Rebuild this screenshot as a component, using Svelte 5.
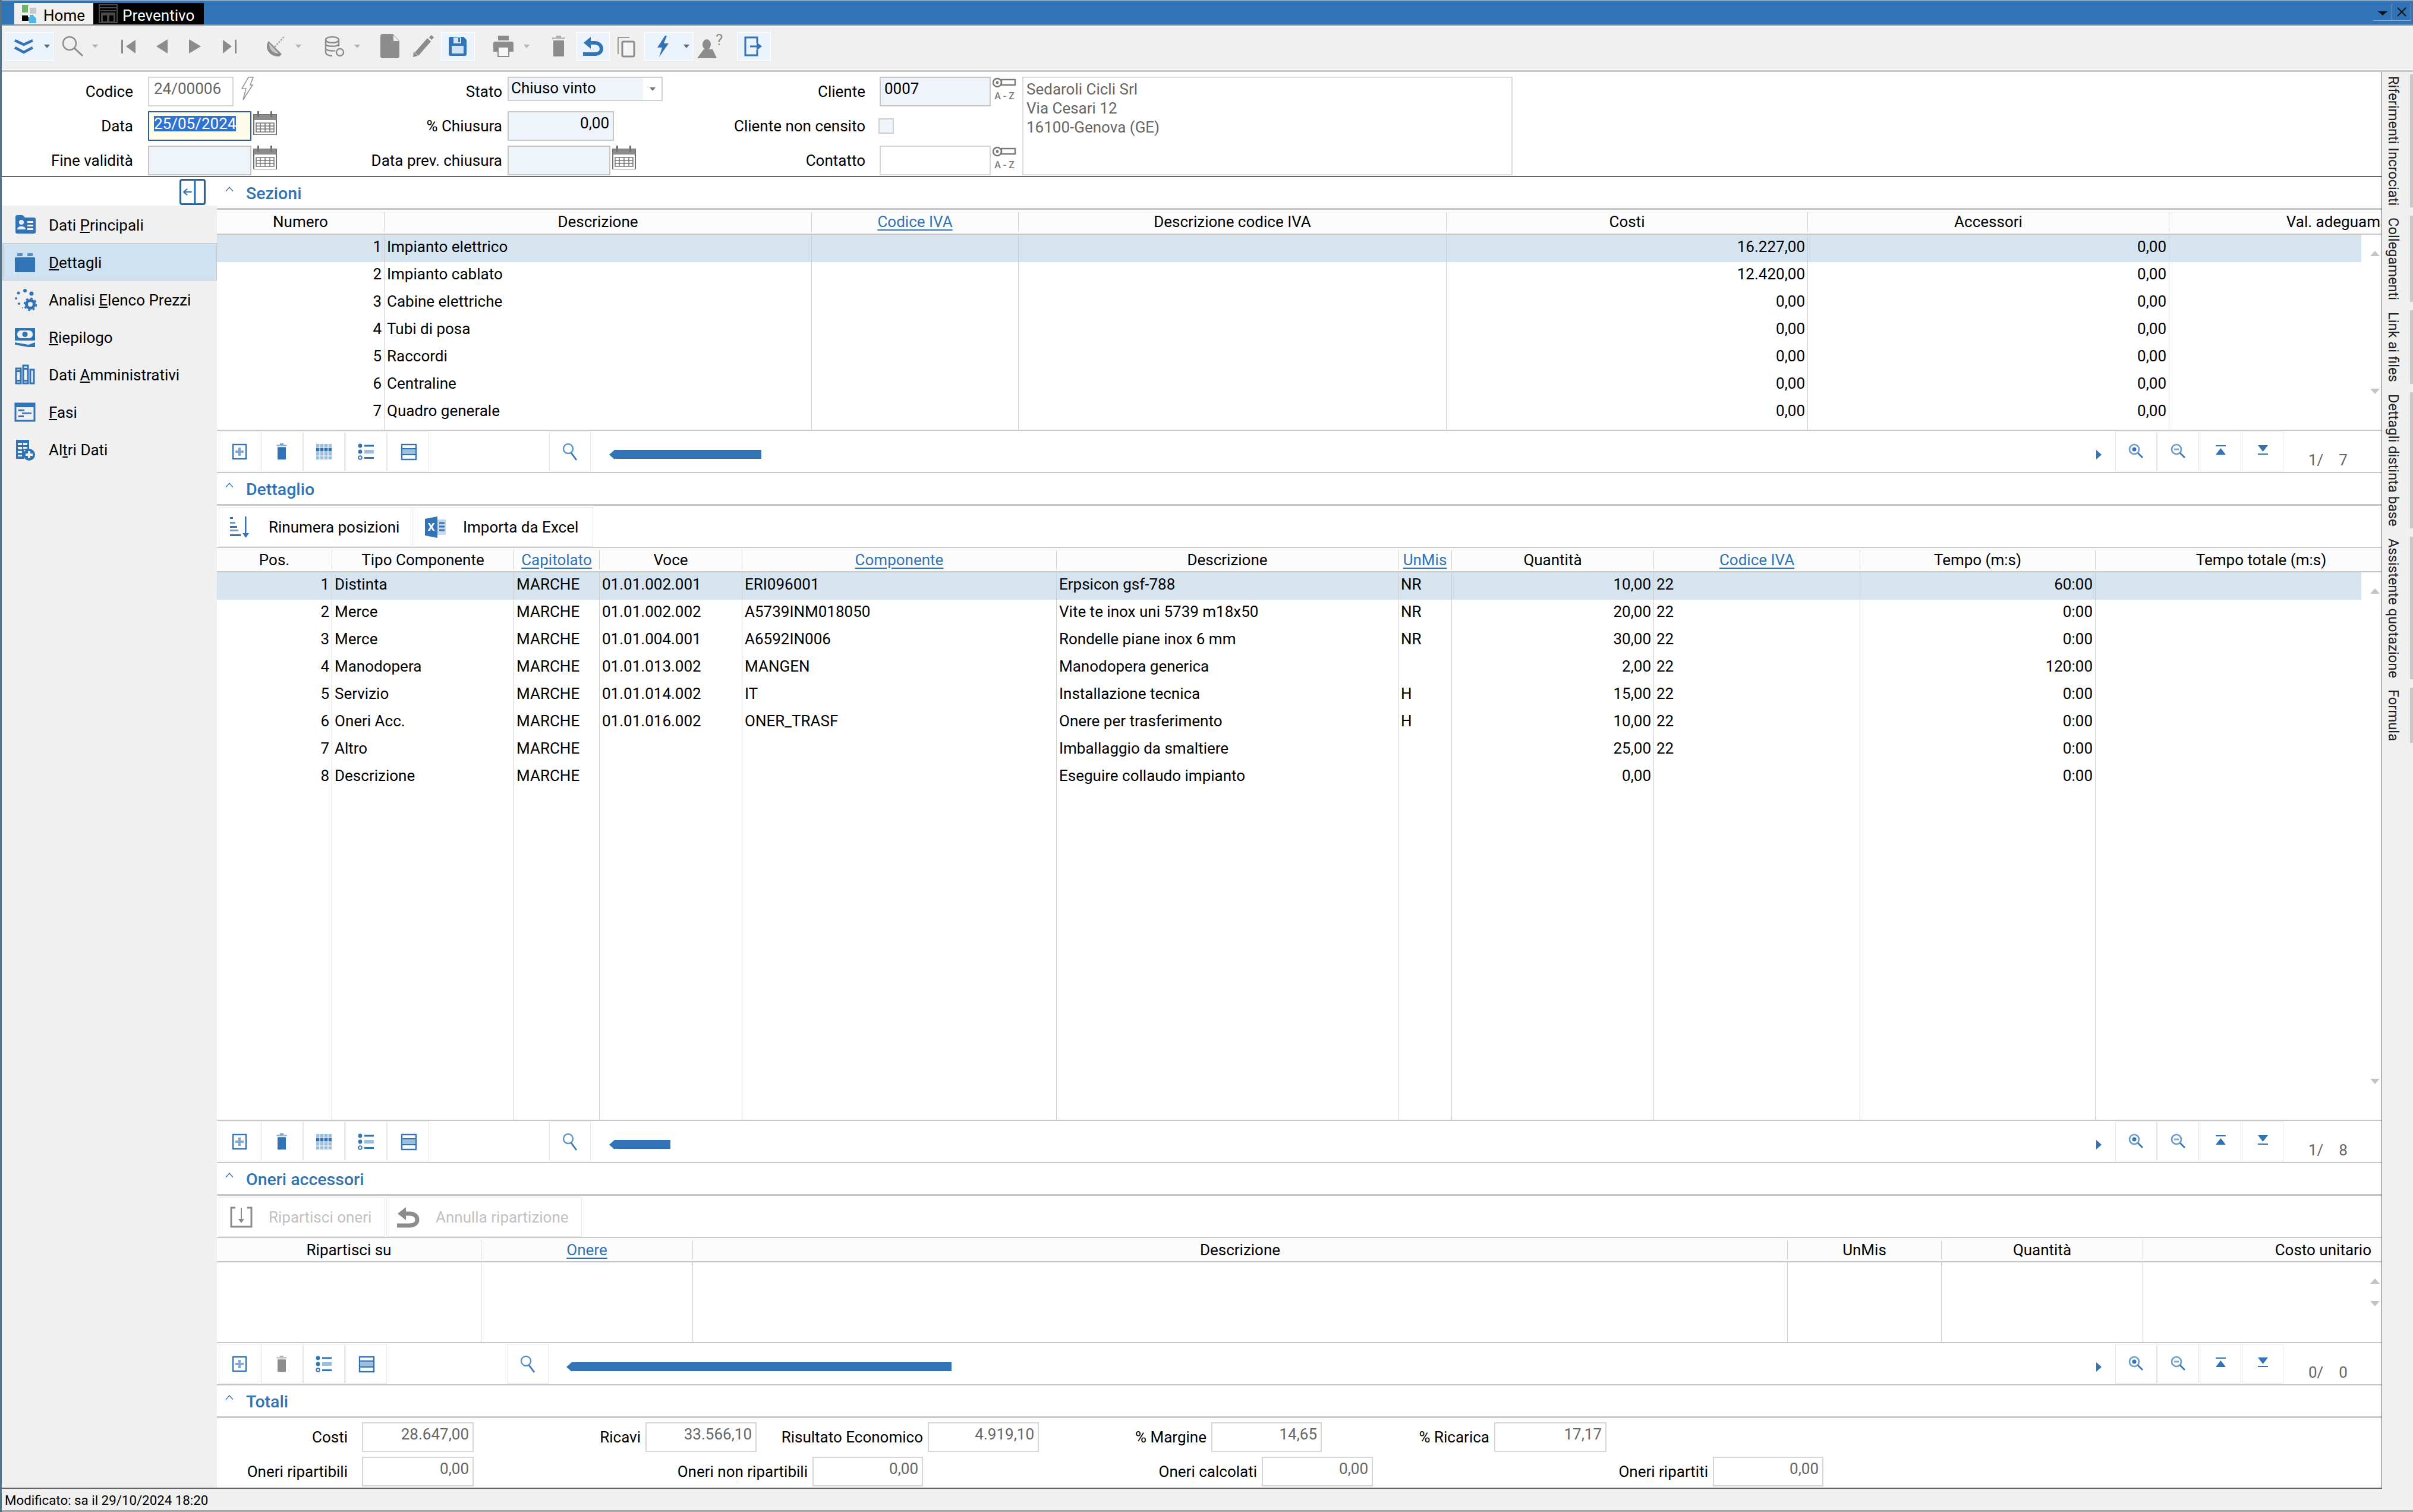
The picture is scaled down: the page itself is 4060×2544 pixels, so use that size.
<script>
  const BLUE = "#3173b7";
  const GRAY = "#8c8c8c";

  // toolbar: left edge of each tool in window pixels, margins are derived from it
  const tools = [
    { x: 8, w: 82, pad: 14, icon: "chevrons", caret: "dark", btn: true },
    { x: 103, w: 63, pad: 0, icon: "search", caret: "light" },
    { x: 198, w: 36, pad: 0, icon: "first" },
    { x: 254, w: 36, pad: 0, icon: "prev" },
    { x: 310, w: 36, pad: 0, icon: "next" },
    { x: 368, w: 36, pad: 0, icon: "last" },
    { x: 445, w: 63, pad: 0, icon: "dish", caret: "light" },
    { x: 544, w: 62, pad: 0, icon: "db", caret: "light" },
    { x: 638, w: 36, pad: 0, icon: "doc" },
    { x: 694, w: 36, pad: 0, icon: "pencil" },
    { x: 742, w: 57, pad: 10, icon: "save", btn: true },
    { x: 829, w: 62, pad: 0, icon: "printer", caret: "light" },
    { x: 922, w: 36, pad: 0, icon: "trash" },
    { x: 970, w: 56, pad: 10, icon: "undo", btn: true },
    { x: 1036, w: 36, pad: 0, icon: "copy" },
    { x: 1084, w: 82, pad: 14, icon: "bolt", caret: "dark", btn: true },
    { x: 1177, w: 36, pad: 0, icon: "person" },
    { x: 1240, w: 57, pad: 8, icon: "exit", btn: true },
  ].map((t, i, all) => ({ ...t, ml: i ? t.x - all[i - 1].x - all[i - 1].w : t.x - 3 }));

  const sideItems = [
    { icon: "idcard", pre: "Dati ", key: "P", post: "rincipali" },
    { icon: "folder", pre: "", key: "D", post: "ettagli", active: true },
    { icon: "gears", pre: "Analisi ", key: "E", post: "lenco Prezzi" },
    { icon: "money", pre: "", key: "R", post: "iepilogo" },
    { icon: "books", pre: "Dati ", key: "A", post: "mministrativi" },
    { icon: "gantt", pre: "", key: "F", post: "asi" },
    { icon: "tableplus", pre: "Al", key: "t", post: "ri Dati" },
  ];

  const railTabs = ["Riferimenti Incrociati", "Collegamenti", "Link ai files", "Dettagli distinta base", "Assistente quotazione", "Formula"];

  function widths(bounds) {
    return bounds.slice(1).map((b, i) => b - bounds[i]);
  }

  const sezioni = {
    title: "Sezioni",
    headH: 42,
    bodyH: 328,
    bounds: [365, 647, 1366, 1714, 2434, 3042, 3650, 3973],
    align: ["r", "l", "l", "l", "r", "r", "l"],
    head: [
      { t: "Numero" }, { t: "Descrizione" }, { t: "Codice IVA", link: true },
      { t: "Descrizione codice IVA" }, { t: "Costi" }, { t: "Accessori" }, { t: "Val. adeguam", right: true },
    ],
    rows: [
      ["1", "Impianto elettrico", "", "", "16.227,00", "0,00", ""],
      ["2", "Impianto cablato", "", "", "12.420,00", "0,00", ""],
      ["3", "Cabine elettriche", "", "", "0,00", "0,00", ""],
      ["4", "Tubi di posa", "", "", "0,00", "0,00", ""],
      ["5", "Raccordi", "", "", "0,00", "0,00", ""],
      ["6", "Centraline", "", "", "0,00", "0,00", ""],
      ["7", "Quadro generale", "", "", "0,00", "0,00", ""],
    ],
  };

  const dettaglio = {
    title: "Dettaglio",
    headH: 41,
    bodyH: 921,
    bounds: [365, 559, 865, 1009, 1249, 1778, 2353, 2443, 2783, 3130, 3526, 3973],
    align: ["r", "l", "l", "l", "l", "l", "l", "r", "l", "r", "l"],
    head: [
      { t: "Pos." }, { t: "Tipo Componente" }, { t: "Capitolato", link: true }, { t: "Voce" },
      { t: "Componente", link: true }, { t: "Descrizione" }, { t: "UnMis", link: true }, { t: "Quantità" },
      { t: "Codice IVA", link: true }, { t: "Tempo (m:s)" }, { t: "Tempo totale (m:s)", shift: true },
    ],
    rows: [
      ["1", "Distinta", "MARCHE", "01.01.002.001", "ERI096001", "Erpsicon gsf-788", "NR", "10,00", "22", "60:00", ""],
      ["2", "Merce", "MARCHE", "01.01.002.002", "A5739INM018050", "Vite te inox uni 5739 m18x50", "NR", "20,00", "22", "0:00", ""],
      ["3", "Merce", "MARCHE", "01.01.004.001", "A6592IN006", "Rondelle piane inox 6 mm", "NR", "30,00", "22", "0:00", ""],
      ["4", "Manodopera", "MARCHE", "01.01.013.002", "MANGEN", "Manodopera generica", "", "2,00", "22", "120:00", ""],
      ["5", "Servizio", "MARCHE", "01.01.014.002", "IT", "Installazione tecnica", "H", "15,00", "22", "0:00", ""],
      ["6", "Oneri Acc.", "MARCHE", "01.01.016.002", "ONER_TRASF", "Onere per trasferimento", "H", "10,00", "22", "0:00", ""],
      ["7", "Altro", "MARCHE", "", "", "Imballaggio da smaltiere", "", "25,00", "22", "0:00", ""],
      ["8", "Descrizione", "MARCHE", "", "", "Eseguire collaudo impianto", "", "0,00", "", "0:00", ""],
    ],
  };

  const oneri = {
    title: "Oneri accessori",
    headH: 41,
    bodyH: 134,
    bounds: [365, 810, 1166, 3008, 3267, 3606, 3973],
    align: ["l", "l", "l", "l", "l", "l"],
    head: [
      { t: "Ripartisci su" }, { t: "Onere", link: true }, { t: "Descrizione" },
      { t: "UnMis" }, { t: "Quantità" }, { t: "Costo unitario", right: true, pad: true },
    ],
    rows: [],
  };

  const bar1 = { tools: ["add", "gtrash", "grid", "list", "rows"], search: 924, thumb: [1024, 1280], count: "1/    7" };
  const bar2 = { tools: ["add", "gtrash", "grid", "list", "rows"], search: 924, thumb: [1024, 1127], count: "1/    8" };
  const bar3 = { tools: ["add", "gtrashoff", "list", "rows"], search: 853, thumb: [952, 1600], count: "0/    0" };

  const totRows = [
    [
      { label: "Costi", from: 365, x: 609, end: 797, value: "28.647,00", gap: 24 },
      { label: "Ricavi", x: 1086, end: 1273, value: "33.566,10", gap: 8 },
      { label: "Risultato Economico", x: 1561, end: 1748, value: "4.919,10", gap: 8 },
      { label: "% Margine", x: 2038, end: 2224, value: "14,65", gap: 8 },
      { label: "% Ricarica", x: 2514, end: 2703, value: "17,17", gap: 8 },
    ],
    [
      { label: "Oneri ripartibili", from: 365, x: 609, end: 797, value: "0,00", gap: 24 },
      { label: "Oneri non ripartibili", x: 1367, end: 1553, value: "0,00", gap: 8 },
      { label: "Oneri calcolati", x: 2123, end: 2310, value: "0,00", gap: 8 },
      { label: "Oneri ripartiti", x: 2882, end: 3068, value: "0,00", gap: 8 },
    ],
  ].map((row) => {
    let prev = row[0].from;
    return row.map((f) => {
      const out = { ...f, width: f.end - prev };
      prev = f.end;
      return out;
    });
  });
</script>

{#snippet ico(name, size = 36)}
  <svg class="ico" width={size} height={size} viewBox="0 0 36 36">
    {#if name === "chevrons"}
      <g fill="none" stroke={BLUE} stroke-width="4.5">
        <polyline points="3,8 18,15 33,8" />
        <polyline points="3,20 18,28 33,20" />
      </g>
    {:else if name === "search"}
      <circle cx="14" cy="13" r="11" fill="none" stroke={GRAY} stroke-width="2.4" />
      <line x1="22" y1="21" x2="36" y2="34" stroke={GRAY} stroke-width="3" />
    {:else if name === "first"}
      <rect x="6" y="7" width="3" height="23" fill={GRAY} />
      <polygon points="14,18 30,7 30,30" fill={GRAY} />
    {:else if name === "prev"}
      <polygon points="9,18 28,6 28,30" fill={GRAY} />
    {:else if name === "next"}
      <polygon points="8,6 8,30 28,18" fill={GRAY} />
    {:else if name === "last"}
      <polygon points="7,7 7,30 22,18" fill={GRAY} />
      <rect x="27" y="7" width="3" height="23" fill={GRAY} />
    {:else if name === "dish"}
      <path d="M7 9 C-1 19 7 36 25 35 L29 31 Z" fill={GRAY} />
      <path d="M8 13 L24 30 C15 31 7 22 8 13Z" fill="#c8c8c8" />
      <line x1="17" y1="19" x2="33" y2="2" stroke="#a8a8a8" stroke-width="2.5" stroke-dasharray="3 2" />
    {:else if name === "db"}
      <g fill="none" stroke={GRAY} stroke-width="2.4">
        <ellipse cx="15" cy="7" rx="11" ry="5" />
        <path d="M4 7 V28 C4 32 10 34 15 34 M26 7 V18" />
        <path d="M4 14 C4 19 26 19 26 14 M4 21 C4 26 18 26 20 25" />
        <circle cx="28" cy="28" r="6" />
      </g>
    {:else if name === "doc"}
      <path d="M6 -3 H23 L34 9 V34 Q34 38 30 38 H6 Q2 38 2 34 V1 Q2 -3 6 -3Z" fill={GRAY} />
      <polygon points="24,-1 33,9 24,9" fill="#eeeeee" />
    {:else if name === "pencil"}
      <line x1="7" y1="31" x2="28" y2="7" stroke={GRAY} stroke-width="8" />
      <line x1="30" y1="5" x2="34" y2="1" stroke={GRAY} stroke-width="6" />
      <polygon points="1,36 2,27 9,34" fill={GRAY} />
    {:else if name === "save"}
      <path d="M6 2 H28 L33 7 V31 Q33 34 30 34 H6 Q3 34 3 31 V5 Q3 2 6 2Z" fill={BLUE} />
      <rect x="8" y="17" width="20" height="13" fill="#d3e2f0" />
      <rect x="11" y="3" width="13" height="10" fill="#d3e2f0" />
      <rect x="19" y="4" width="3" height="7" fill={BLUE} />
    {:else if name === "printer"}
      <rect x="9" y="0" width="18" height="8" fill={GRAY} />
      <path d="M4 10 H32 Q35 10 35 13 V27 H1 V13 Q1 10 4 10Z" fill={GRAY} />
      <rect x="9" y="19" width="18" height="16" fill="#f6f6f6" stroke={GRAY} stroke-width="2" />
    {:else if name === "trash" || name === "gtrash" || name === "gtrashoff"}
      {@const c = name === "gtrash" ? BLUE : GRAY}
      <rect x="14" y="0" width="8" height="3" fill={c} opacity=".7" />
      <rect x="7" y="3" width="22" height="3" fill={c} opacity=".55" />
      <rect x="9" y="8" width="18" height="27" rx="1" fill={c} />
    {:else if name === "undo"}
      <path d="M10 12 H20 C28 12 32 17 32 22 C32 28 27 31 20 31 H1" fill="none" stroke={BLUE} stroke-width="6" />
      <polygon points="2,12 14,2 14,22" fill={BLUE} />
    {:else if name === "copy"}
      <path d="M4 31 V3 H23" fill="none" stroke="#9c9c9c" stroke-width="2" />
      <rect x="11" y="10" width="20" height="25" rx="2" fill="#f4f4f4" stroke={GRAY} stroke-width="3" />
    {:else if name === "bolt"}
      <polygon points="21,0 8,20 16,20 11,36 27,13 19,13 24,0" fill={BLUE} />
    {:else if name === "person"}
      <polygon points="-4,38 7,23 22,23 29,38" fill={GRAY} />
      <ellipse cx="12" cy="15" rx="7" ry="9" fill={GRAY} />
      <text class="svgtext" x="27" y="16" font-size="26" fill={GRAY}>?</text>
    {:else if name === "exit"}
      <path d="M26 12 V3 H6 V33 H26 V24" fill="none" stroke={BLUE} stroke-width="3" />
      <line x1="14" y1="18" x2="27" y2="18" stroke={BLUE} stroke-width="3" />
      <polygon points="25,11 34,18 25,25" fill={BLUE} />
    {:else if name === "idcard"}
      <path d="M2 4 Q2 1 5 1 H14 L18 5 H33 Q36 5 36 8 V29 Q36 32 33 32 H5 Q2 32 2 29Z" fill={BLUE} />
      <circle cx="12" cy="13" r="4" fill="#f0f0f0" />
      <path d="M5 25 C5 18 19 18 19 25Z" fill="#f0f0f0" />
      <rect x="22" y="11" width="10" height="3" fill="#f0f0f0" />
      <rect x="22" y="17" width="10" height="3" fill="#f0f0f0" />
      <rect x="22" y="23" width="10" height="3" fill="#f0f0f0" />
    {:else if name === "folder"}
      <rect x="5" y="2" width="9" height="5" rx="1" fill={BLUE} opacity=".75" />
      <rect x="22" y="2" width="9" height="5" rx="1" fill={BLUE} opacity=".75" />
      <rect x="1" y="9" width="34" height="25" rx="1" fill={BLUE} />
    {:else if name === "gears"}
      <circle cx="18" cy="2" r="3" fill={BLUE} />
      <circle cx="29" cy="7" r="3.5" fill={BLUE} />
      <circle cx="7" cy="6" r="2.5" fill={BLUE} />
      <circle cx="3" cy="15" r="2" fill={BLUE} />
      <circle cx="8" cy="24" r="2" fill={BLUE} />
      <circle cx="14" cy="31" r="1" fill={BLUE} />
      <circle cx="27" cy="25" r="6.5" fill="none" stroke={BLUE} stroke-width="5" />
      <circle cx="27" cy="25" r="10" fill="none" stroke={BLUE} stroke-width="2.5" stroke-dasharray="4 3.8" />
    {:else if name === "money"}
      <rect x="1" y="2" width="34" height="21" rx="1" fill={BLUE} />
      <rect x="5" y="6" width="26" height="13" rx="6" fill="#f0f0f0" />
      <circle cx="18" cy="12.5" r="4.5" fill={BLUE} />
      <path d="M1 26 L24 30 L35 26 V34 L24 34 L1 30Z" fill={BLUE} />
    {:else if name === "books"}
      <g fill="#f0f0f0" stroke={BLUE} stroke-width="3">
        <rect x="3" y="7" width="8" height="25" />
        <rect x="15" y="2" width="8" height="30" />
        <rect x="27" y="9" width="6" height="23" />
      </g>
      <rect x="3" y="10" width="8" height="3" fill={BLUE} />
      <rect x="15" y="6" width="8" height="3" fill={BLUE} />
      <rect x="15" y="26" width="8" height="3" fill={BLUE} />
      <rect x="3" y="26" width="8" height="3" fill={BLUE} />
    {:else if name === "gantt"}
      <rect x="2" y="3" width="32" height="29" fill="#f0f0f0" stroke={BLUE} stroke-width="3" />
      <rect x="2" y="3" width="32" height="6" fill={BLUE} />
      <rect x="7" y="13" width="10" height="3" fill={BLUE} />
      <rect x="13" y="18" width="16" height="2.5" fill={BLUE} />
      <rect x="7" y="23" width="9" height="3" fill={BLUE} />
    {:else if name === "tableplus"}
      <path d="M3 1 H25 V18 H16 V33 H3Z" fill={BLUE} />
      <g fill="#f0f0f0">
        <rect x="6" y="6" width="7" height="4" /><rect x="15" y="6" width="7" height="4" />
        <rect x="6" y="13" width="7" height="4" /><rect x="15" y="13" width="7" height="3" />
        <rect x="6" y="20" width="7" height="3" /><rect x="6" y="26" width="7" height="3" />
      </g>
      <circle cx="25" cy="26" r="10" fill={BLUE} />
      <path d="M25 20 V32 M19 26 H31" stroke="#f0f0f0" stroke-width="4" />
    {:else if name === "toggle"}
      <rect x="2" y="2" width="32" height="32" rx="2" fill="none" stroke="#2b5f96" stroke-width="2.4" />
      <line x1="21" y1="2" x2="21" y2="34" stroke={BLUE} stroke-width="2.6" />
      <path d="M6 18 H17 M6 18 L11 14 M6 18 L11 22" fill="none" stroke={BLUE} stroke-width="1.6" />
    {:else if name === "add"}
      <rect x="7" y="6" width="22" height="24" fill="#fff" stroke={BLUE} stroke-width="2.4" />
      <path d="M18 11 V25 M11 18 H25" stroke="#7fa9d2" stroke-width="4" />
    {:else if name === "grid"}
      <rect x="5" y="5" width="26" height="26" fill="#9cbfdf" />
      <rect x="5" y="11" width="26" height="7" fill={BLUE} />
      <g stroke="#fff" stroke-width="1.2">
        <path d="M11 5 V31 M18 5 V31 M25 5 V31 M5 11 H31 M5 18 H31 M5 25 H31" />
      </g>
    {:else if name === "list"}
      <circle cx="8" cy="8" r="3.4" fill={BLUE} />
      <circle cx="8" cy="18" r="3.4" fill={BLUE} />
      <circle cx="8" cy="28" r="2.8" fill="#fff" stroke={BLUE} stroke-width="1.8" />
      <rect x="15" y="6.5" width="16" height="3" fill={BLUE} />
      <rect x="15" y="15" width="16" height="6" fill="#9cbfdf" />
      <rect x="15" y="27" width="16" height="3" fill={BLUE} />
    {:else if name === "rows"}
      <rect x="7" y="6" width="24" height="25" fill="#fff" stroke={BLUE} stroke-width="2.4" />
      <rect x="8" y="14" width="22" height="8" fill="#9cbfdf" />
      <path d="M7 13 H31 M7 23 H31" stroke={BLUE} stroke-width="1.8" />
    {:else if name === "gsearch"}
      <circle cx="15" cy="13" r="8" fill="none" stroke="#5d94c9" stroke-width="2.4" />
      <line x1="20" y1="20" x2="29" y2="32" stroke={BLUE} stroke-width="2.6" />
    {:else if name === "zoomin" || name === "zoomout"}
      <circle cx="15" cy="14" r="8" fill="#fff" stroke="#6b9bcb" stroke-width="2.6" />
      {#if name === "zoomin"}
        <circle cx="15" cy="14" r="3.5" fill={BLUE} />
      {:else}
        <rect x="11" y="12.5" width="8" height="3" fill="#7fa9d2" />
      {/if}
      <line x1="21" y1="20" x2="29" y2="28" stroke={BLUE} stroke-width="2.6" />
    {:else if name === "top"}
      <rect x="10" y="7" width="17" height="2" fill={BLUE} />
      <polygon points="18.5,12 27,23 10,23" fill={BLUE} />
    {:else if name === "bottom"}
      <rect x="10" y="21" width="17" height="2" fill={BLUE} />
      <polygon points="18.5,18 27,7 10,7" fill={BLUE} />
    {:else if name === "renumber"}
      <g fill={BLUE}>
        <rect x="1" y="1" width="5" height="3" /><rect x="1" y="9" width="9" height="3" opacity=".7" />
        <rect x="1" y="16" width="12" height="3" /><rect x="1" y="22" width="14" height="3" opacity=".7" />
        <rect x="1" y="30" width="18" height="3" />
        <rect x="26" y="0" width="2.5" height="32" />
        <polygon points="22,28 33,28 27.5,36" />
      </g>
    {:else if name === "excel"}
      <polygon points="0,4 21,0 21,36 0,32" fill={BLUE} />
      <rect x="21" y="5" width="14" height="26" fill="#c6d9ec" />
      <path d="M24 11 H33 M24 17 H33 M24 23 H33" stroke={BLUE} stroke-width="3" />
      <text class="svgtext" x="10.5" y="24" font-size="19" font-weight="700" fill="#fff" text-anchor="middle">X</text>
    {:else if name === "spread"}
      <path d="M8 2 H1 V34 H35 V2 H28" fill="none" stroke={GRAY} stroke-width="3" />
      <path d="M18 2 V22" stroke={GRAY} stroke-width="2" />
      <polygon points="13,21 23,21 18,28" fill={GRAY} />
    {:else if name === "gundo"}
      <path d="M10 12 H20 C29 12 33 17 33 22 C33 28 28 32 20 32 H-1" fill="none" stroke={GRAY} stroke-width="7" />
      <polygon points="0,12 14,1 14,23" fill={GRAY} />
    {/if}
  </svg>
{/snippet}

{#snippet calendar()}
  <svg class="formico" width="40" height="40" viewBox="0 0 40 40">
    <rect x="1" y="6" width="38" height="34" fill="#fff" stroke="#6e6e6e" stroke-width="2" />
    <rect x="1" y="6" width="38" height="9" fill="#8c8c8c" />
    <rect x="7" y="0" width="3" height="10" fill="#6e6e6e" />
    <rect x="29" y="0" width="3" height="10" fill="#6e6e6e" />
    <path d="M5 20 H35 V35 H5Z M5 25 H35 M5 30 H35 M12 20 V35 M20 20 V35 M28 20 V35" fill="none" stroke="#777" stroke-width="1.6" />
  </svg>
{/snippet}

{#snippet keyAZ()}
  <svg class="formico" width="42" height="46" viewBox="0 0 42 46">
    <circle cx="8" cy="10" r="7" fill="#fff" stroke="#777" stroke-width="2.4" />
    <circle cx="8" cy="10" r="2.4" fill="#777" />
    <rect x="15" y="5" width="23" height="9" fill="#fff" stroke="#777" stroke-width="2.4" />
    <text class="svgtext" x="20" y="38" font-size="16" font-weight="500" fill="#777" text-anchor="middle">A - Z</text>
  </svg>
{/snippet}

{#snippet sectionTitle(text)}
  <div class="sectitle">
    <svg class="collapse" width="14" height="8" viewBox="0 0 14 8"><polyline points="1,8 7,1 13,8" fill="none" stroke={BLUE} stroke-width="1.3" /></svg>
    <span>{text}</span>
  </div>
{/snippet}

{#snippet gridBar(cfg)}
  <div class="gridbar">
    {#each cfg.tools as t}
      <div class="gbtn">{@render ico(t, t === "gtrash" || t === "gtrashoff" ? 28 : 36)}</div>
    {/each}
    <div class="gbtn search" style:margin-left="{cfg.search - (368 + cfg.tools.length * 71)}px">{@render ico("gsearch")}</div>
    <div class="thumbarrow left" style:margin-left="{cfg.thumb[0] - cfg.search - 70}px"></div>
    <div class="thumb" style:width="{cfg.thumb[1] - cfg.thumb[0] - 9}px"></div>
    <div class="thumbarrow right" style:margin-left="{3525 - cfg.thumb[1]}px"></div>
    <div class="gbtn first-right">{@render ico("zoomin")}</div>
    <div class="gbtn">{@render ico("zoomout")}</div>
    <div class="gbtn">{@render ico("top")}</div>
    <div class="gbtn">{@render ico("bottom")}</div>
    <div class="count">{cfg.count}</div>
  </div>
{/snippet}

{#snippet table(cfg)}
  {@const w = widths(cfg.bounds)}
  {@const bodyCols = w.map((n) => n + "px").join(" ")}
  {@const headCols = w.slice(0, -1).map((n) => n + "px").join(" ") + " 1fr"}
  <div class="thead" style:grid-template-columns={headCols} style:height="{cfg.headH}px">
    {#each cfg.head as h}
      <div class="hcell" class:link={h.link} class:right={h.right} class:pad={h.pad} class:shift={h.shift}><span>{h.t}</span></div>
    {/each}
  </div>
  <div class="tbody" style:height="{cfg.bodyH}px">
    <div class="rows">
      {#each cfg.rows as row, r}
        <div class="row" class:sel={r === 0} style:grid-template-columns={bodyCols}>
          {#each row as c, i}
            <div class="cell {cfg.align[i]}">{c}</div>
          {/each}
        </div>
      {/each}
      <div class="row fill" style:grid-template-columns={bodyCols}>
        {#each w as _}
          <div class="cell"></div>
        {/each}
      </div>
    </div>
    <div class="gutter">
      <div class="sc up"></div>
      <div class="sc down"></div>
    </div>
  </div>
{/snippet}

<div class="app">
  <header class="titlebar">
    <div class="tab home">
      <svg class="tabico" width="26" height="32" viewBox="0 0 26 32">
        <rect x="1" y="1" width="12" height="13" fill="#6bb46f" />
        <rect x="13" y="6" width="12" height="10" fill="#c9c9c9" />
        <rect x="1" y="19" width="11" height="9" fill="#000" />
        <polygon points="12,18 19,18 25,24 25,32 13,32" fill="#4fb6e8" />
        <polygon points="11,2 14,2 14,22 11,22" fill="#f0f0f0" />
      </svg>
      <span>Home</span>
    </div>
    <div class="tab prev">
      <svg class="tabico" width="32" height="32" viewBox="0 0 32 32">
        <rect x="1" y="1" width="30" height="30" fill="none" stroke="#4a4a4a" stroke-width="2" />
        <path d="M1 6 H31 M3 11 H29" stroke="#4a4a4a" stroke-width="2" />
        <rect x="4" y="14" width="24" height="16" fill="#4a4a4a" />
        <rect x="7" y="19" width="7" height="10" fill="#000" />
        <rect x="18" y="19" width="7" height="10" fill="#000" />
      </svg>
      <span>Preventivo</span>
    </div>
    <div class="winbtns">
      <div class="winbtn"><span class="wincaret"></span></div>
      <div class="winbtn">
        <svg width="18" height="16" viewBox="0 0 18 16"><path d="M2 1 L16 15 M16 1 L2 15" stroke="#111" stroke-width="2" /></svg>
      </div>
    </div>
  </header>

  <nav class="toolbar">
    {#each tools as t}
      <div class="tool" class:btn={t.btn} style:margin-left="{t.ml}px" style:width="{t.w}px" style:padding-left="{t.pad}px">
        {@render ico(t.icon)}
        {#if t.caret}<span class="caret {t.caret}"></span>{/if}
      </div>
    {/each}
  </nav>

  <div class="window">
    <div class="content">
      <section class="form">
        <div class="fcol col1">
          <div class="frow">
            <span class="flabel">Codice</span>
            <div class="inp ro codice">24/00006</div>
            <svg class="formico boltico" width="22" height="40" viewBox="0 0 22 40">
              <polygon points="13,1 21,1 16,14 20,14 4,39 9,20 2,20" fill="#fff" stroke="#999" stroke-width="1.6" />
            </svg>
          </div>
          <div class="frow">
            <span class="flabel">Data</span>
            <div class="inp focus"><span class="selected">25/05/2024</span></div>
            {@render calendar()}
          </div>
          <div class="frow">
            <span class="flabel">Fine validità</span>
            <div class="inp edit date"></div>
            {@render calendar()}
          </div>
        </div>

        <div class="fcol col2">
          <div class="frow">
            <span class="flabel">Stato</span>
            <div class="select">
              <span class="selval">Chiuso vinto</span>
              <span class="selarrow"><span class="caret sel"></span></span>
            </div>
          </div>
          <div class="frow">
            <span class="flabel">% Chiusura</span>
            <div class="inp edit pct">0,00</div>
          </div>
          <div class="frow">
            <span class="flabel">Data prev. chiusura</span>
            <div class="inp edit dateprev"></div>
            {@render calendar()}
          </div>
        </div>

        <div class="fcol col3">
          <div class="frow">
            <span class="flabel">Cliente</span>
            <div class="inp edit client">0007</div>
            {@render keyAZ()}
          </div>
          <div class="frow">
            <span class="flabel check">Cliente non censito</span>
            <div class="checkbox"></div>
          </div>
          <div class="frow">
            <span class="flabel">Contatto</span>
            <div class="inp ro client"></div>
            {@render keyAZ()}
          </div>
        </div>

        <div class="address">
          <div>Sedaroli Cicli Srl</div>
          <div>Via Cesari 12</div>
          <div>16100-Genova (GE)</div>
        </div>
      </section>

      <div class="work">
        <aside class="sidebar">
          <div class="sidetop">{@render ico("toggle", 46)}</div>
          <ul class="sidelist">
            {#each sideItems as s}
              <li class:active={s.active}>
                <span class="sideico">{@render ico(s.icon)}</span>
                <span>{s.pre}<u>{s.key}</u>{s.post}</span>
              </li>
            {/each}
          </ul>
        </aside>

        <main class="main">
          {@render sectionTitle(sezioni.title)}
          {@render table(sezioni)}
          {@render gridBar(bar1)}

          {@render sectionTitle(dettaglio.title)}
          <div class="btnbar">
            <button class="bbtn b1" type="button">{@render ico("renumber")}<span>Rinumera posizioni</span></button>
            <button class="bbtn b2" type="button">{@render ico("excel")}<span>Importa da Excel</span></button>
          </div>
          {@render table(dettaglio)}
          {@render gridBar(bar2)}

          {@render sectionTitle(oneri.title)}
          <div class="btnbar">
            <button class="bbtn b3 off" type="button">{@render ico("spread")}<span>Ripartisci oneri</span></button>
            <button class="bbtn b4 off" type="button">{@render ico("gundo")}<span>Annulla ripartizione</span></button>
          </div>
          {@render table(oneri)}
          {@render gridBar(bar3)}

          {@render sectionTitle("Totali")}
          <div class="totals">
            {#each totRows as row}
              <div class="trow">
                {#each row as f}
                  <div class="tfield" style:width="{f.width}px">
                    <span class="tlabel" style:margin-right="{f.gap}px">{f.label}</span>
                    <div class="inp ro num" style:width="{f.end - f.x}px">{f.value}</div>
                  </div>
                {/each}
              </div>
            {/each}
          </div>
        </main>
      </div>
    </div>

    <div class="rail">
      {#each railTabs as t}
        <div class="railtab">{t}</div>
      {/each}
    </div>
  </div>

  <footer class="status">Modificato: sa il 29/10/2024 18:20</footer>
</div>

<style>
  :global(body) {
    margin: 0;
    background: #f0f0f0;
  }

  .app {
    width: 4060px;
    height: 2544px;
    display: flex;
    flex-direction: column;
    box-sizing: border-box;
    border-left: 3px solid #557388;
    font-family: Roboto, sans-serif;
    font-size: 26px;
    color: #000;
    overflow: hidden;
    background: #f0f0f0;
  }

  .ico {
    display: block;
    flex: none;
    overflow: visible;
  }

  .svgtext {
    font-family: Roboto, sans-serif;
  }

  /* title bar */
  .titlebar {
    height: 41px;
    box-sizing: border-box;
    flex: none;
    display: flex;
    align-items: flex-end;
    padding-left: 21px;
    background: #3173b7;
    border-top: 2px solid #8fa6ba;
    position: relative;
  }

  .tab {
    height: 36px;
    display: flex;
    align-items: center;
    box-sizing: border-box;
    font-size: 26px;
  }

  .tab span {
    padding-top: 6px;
  }

  .tab.home {
    width: 133px;
    padding-left: 12px;
    gap: 11px;
    background: #f0f0f0;
  }

  .tab.prev {
    width: 186px;
    padding-left: 9px;
    gap: 8px;
    background: #000;
    color: #fff;
  }

  .tabico {
    flex: none;
  }

  .winbtns {
    margin-left: auto;
    display: flex;
    align-self: flex-start;
    margin-top: 4px;
    margin-right: 3px;
    padding-right: 0;
  }

  .winbtn {
    width: 32px;
    height: 29px;
    box-sizing: border-box;
    display: flex;
    align-items: center;
    justify-content: center;
    border-right: 1px solid #7ea6cf;
    border-bottom: 1px solid #7ea6cf;
  }

  .wincaret {
    width: 0;
    height: 0;
    border-left: 8px solid transparent;
    border-right: 8px solid transparent;
    border-top: 7px solid #111;
    margin-top: 4px;
  }

  /* main toolbar */
  .toolbar {
    flex: none;
    height: 80px;
    box-sizing: border-box;
    display: flex;
    align-items: flex-start;
    padding-top: 11px;
    background: #f0f0f0;
    border-top: 2px solid #8a8a8a;
    border-bottom: 3px solid #c8c8c8;
    box-shadow: inset 0 -2px 0 #fafafa;
  }

  .tool {
    height: 48px;
    flex: none;
    box-sizing: border-box;
    display: flex;
    align-items: center;
  }

  .tool.btn {
    background: #ebf4fd;
    outline: 1px solid #fff;
    outline-offset: -1px;
  }

  .caret {
    width: 0;
    height: 0;
    margin-left: 16px;
    border-left: 5px solid transparent;
    border-right: 5px solid transparent;
    border-top: 6px solid #b4b4b4;
  }

  .caret.dark {
    border-left-width: 5px;
    border-top-color: #666;
  }

  .caret.sel {
    margin: 0;
    border-top-color: #777;
  }

  /* layout */
  .window {
    flex: 1;
    display: flex;
    min-height: 0;
  }

  .content {
    width: 4005px;
    flex: none;
    display: flex;
    flex-direction: column;
    border-bottom: 2px solid #666;
    box-sizing: border-box;
  }

  .rail {
    flex: 1;
    padding-top: 4px;
    display: flex;
    flex-direction: column;
    gap: 14px;
    align-items: flex-end;
    background: #f0f0f0;
  }

  .railtab {
    writing-mode: vertical-rl;
    font-size: 23.7px;
    color: #222;
    padding: 3px 9px 3px 0;
    width: 52px;
    box-sizing: border-box;
    line-height: 38px;
    border-right: 5px solid #c8c8c8;
    text-align: center;
  }

  /* form header */
  .form {
    flex: none;
    height: 177px;
    box-sizing: border-box;
    padding-top: 8px;
    display: flex;
    background: #fff;
    border-bottom: 2px solid #666;
    border-right: 1px solid #666;
  }

  .fcol {
    flex: none;
    display: flex;
    flex-direction: column;
    gap: 8px;
  }

  .col1 { width: 467px; }
  .col2 { width: 650px; }
  .col3 { width: 600px; }

  .frow {
    height: 50px;
    display: flex;
    align-items: flex-start;
  }

  .flabel {
    flex: none;
    text-align: right;
    line-height: 50px;
  }

  .col1 .flabel { width: 221px; margin-right: 25px; }
  .col2 .flabel { width: 375px; margin-right: 9px; }
  .col3 .flabel { width: 336px; margin-right: 24px; }
  .col3 .flabel.check { margin-right: 22px; }

  .inp {
    height: 50px;
    box-sizing: border-box;
    border: 2px solid #d6d6d6;
    padding: 0 6px;
    line-height: 36px;
    background: #fff;
  }

  .inp.ro { color: #666; }
  .inp.edit { background: #eff4fb; border-color: #c6c6c6; color: #000; }

  .inp.codice { width: 144px; padding-left: 8px; }
  .inp.focus {
    width: 174px;
    background: #fffde9;
    border: 2px solid #2c5d9d;
    padding: 6px 8px;
    line-height: 26px;
  }

  .selected {
    background: #2f73d2;
    color: #fff;
    display: inline-block;
    padding: 0;
  }

  .inp.date { width: 174px; }
  .inp.pct { width: 179px; text-align: right; }
  .inp.dateprev { width: 173px; }
  .inp.client { width: 187px; }

  .formico {
    flex: none;
    margin-left: 3px;
  }

  .boltico { margin-left: 12px; }

  .select {
    width: 261px;
    height: 41px;
    box-sizing: border-box;
    border: 2px solid #cfcfcf;
    display: flex;
    background: #fff;
  }

  .selval {
    width: 222px;
    background: #eff4fb;
    padding-left: 4px;
    line-height: 35px;
  }

  .selarrow {
    flex: 1;
    display: flex;
    align-items: center;
    justify-content: center;
  }

  .checkbox {
    width: 26px;
    height: 26px;
    margin-top: 12px;
    box-sizing: border-box;
    border: 2px solid #cfcfcf;
    background: #eff4fb;
  }

  .address {
    width: 825px;
    height: 166px;
    box-sizing: border-box;
    border: 2px solid #dcdcdc;
    padding: 3px 5px;
    color: #666;
    line-height: 32px;
  }

  /* sidebar */
  .work {
    flex: 1;
    display: flex;
    min-height: 0;
  }

  .sidebar {
    width: 362px;
    flex: none;
    background: #f0f0f0;
  }

  .sidetop {
    height: 48px;
    background: #fff;
    display: flex;
    justify-content: flex-end;
    padding: 2px 18px 0 0;
    box-sizing: border-box;
  }

  .sidelist {
    list-style: none;
    margin: 0;
    padding: 0;
  }

  .sidelist li {
    height: 63px;
    box-sizing: border-box;
    display: flex;
    align-items: center;
    padding: 2px 0 0 21px;
    gap: 22px;
  }

  .sidelist li.active {
    background: #cfe2f1;
    border: 1px solid #c8c8c8;
    border-left-width: 2px;
    margin-left: 1px;
    padding-left: 18px;
  }

  .sideico {
    width: 36px;
    flex: none;
  }

  /* right part */
  .main {
    flex: 1;
    min-width: 0;
    background: #fff;
    border-right: 1px solid #666;
  }

  .sectitle {
    height: 55px;
    box-sizing: border-box;
    border-bottom: 3px solid #c8c8c8;
    display: flex;
    align-items: center;
    padding: 2px 0 0 14px;
    font-size: 28.5px;
    font-weight: 500;
    color: #3173b7;
  }

  .collapse {
    align-self: flex-start;
    margin-top: 14px;
    margin-right: 21px;
    flex: none;
  }

  /* tables */
  .thead {
    display: grid;
    box-sizing: border-box;
    background: #fcfcfc;
    border-bottom: 2px solid #c8c8c8;
    overflow: hidden;
  }

  .hcell {
    margin: 4px 0 3px;
    border-right: 1px solid #cfcfcf;
    text-align: center;
    line-height: 32px;
    white-space: nowrap;
    overflow: hidden;
  }

  .hcell:last-child {
    border-right: 0;
  }

  .hcell.right {
    text-align: right;
    padding-right: 2px;
  }

  .hcell.right.pad {
    padding-right: 17px;
  }

  .hcell.shift {
    padding-left: 76px;
  }

  .hcell.link span {
    color: #3173b7;
    text-decoration: underline;
    text-underline-offset: 4px;
  }

  .tbody {
    display: flex;
    box-sizing: border-box;
  }

  .rows {
    width: 3608px;
    flex: none;
    display: flex;
    flex-direction: column;
  }

  .row {
    height: 46px;
    flex: none;
    display: grid;
  }

  .row.sel {
    background: #d6e4f0;
  }

  .row.fill {
    flex: 1;
  }

  .cell {
    border-right: 1px solid #cfcfcf;
    padding: 0 4px 5px;
    line-height: 41px;
    white-space: nowrap;
    overflow: hidden;
  }

  .cell:last-child {
    border-right: 0;
  }

  .cell.r {
    text-align: right;
  }

  .gutter {
    flex: 1;
    display: flex;
    flex-direction: column;
    justify-content: space-between;
    align-items: flex-end;
    padding: 27px 3px 60px 0;
  }

  .sc {
    width: 0;
    height: 0;
    border-left: 8px solid transparent;
    border-right: 8px solid transparent;
  }

  .sc.up { border-bottom: 9px solid #c4c4c4; }
  .sc.down { border-top: 9px solid #c4c4c4; }

  /* grid toolbar */
  .gridbar {
    height: 73px;
    box-sizing: border-box;
    display: flex;
    align-items: flex-start;
    gap: 1px;
    padding: 1px 0 0 3px;
    border-top: 2px solid #c8c8c8;
    border-bottom: 2px solid #c8c8c8;
  }

  .gbtn {
    width: 70px;
    height: 67px;
    flex: none;
    box-sizing: border-box;
    border: 1px solid #e8e8e8;
    display: flex;
    align-items: center;
    justify-content: center;
    background: #fff;
  }

  .gbtn.first-right {
    margin-left: 22px;
  }

  .thumb {
    height: 15px;
    flex: none;
    margin-top: 31px;
    background: #3173b7;
    margin-left: -1px;
  }

  .thumbarrow {
    flex: none;
    margin-top: 31px;
    width: 0;
    height: 0;
    border-top: 8px solid transparent;
    border-bottom: 8px solid transparent;
  }

  .thumbarrow.left {
    border-right: 9px solid #3173b7;
  }

  .thumbarrow.right {
    border-left: 9px solid #3173b7;
  }

  .count {
    margin-left: 41px;
    margin-top: 32px;
    white-space: pre;
    color: #666;
    line-height: 32px;
  }

  /* button bars */
  .btnbar {
    height: 71px;
    box-sizing: border-box;
    display: flex;
    gap: 2px;
    padding: 2px 0 0 3px;
    border-bottom: 2px solid #c8c8c8;
  }

  .bbtn {
    height: 67px;
    box-sizing: border-box;
    border: 1px solid #e8e8e8;
    background: #fff;
    display: flex;
    align-items: center;
    font: inherit;
    color: #000;
    padding: 0 0 0 17px;
    gap: 30px;
  }

  .bbtn.b1 { width: 326px; }
  .bbtn.b2 { width: 302px; gap: 28px; padding-left: 18px; }
  .bbtn.b3 { width: 280px; padding-left: 19px; gap: 28px; }
  .bbtn.b4 { width: 329px; padding-left: 18px; gap: 28px; }
  .bbtn.off { color: #c4c0c0; }

  /* totals */
  .totals {
    display: flex;
    flex-direction: column;
    gap: 8px;
    padding-top: 7px;
  }

  .trow {
    display: flex;
  }

  .tfield {
    display: flex;
    justify-content: flex-end;
    flex: none;
  }

  .tlabel {
    line-height: 50px;
    white-space: nowrap;
  }

  .inp.num {
    flex: none;
    text-align: right;
  }

  /* status bar */
  .status {
    flex: none;
    height: 39px;
    box-sizing: border-box;
    border-bottom: 3px solid #a8a8a8;
    padding-left: 5px;
    line-height: 38px;
    font-size: 22.3px;
    background: #f0f0f0;
  }
</style>
